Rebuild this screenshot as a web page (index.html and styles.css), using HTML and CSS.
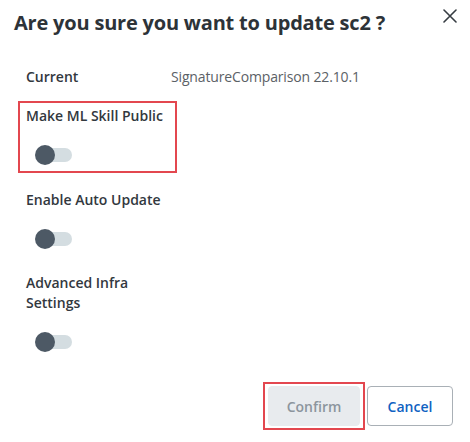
FILE: index.html
```html
<!DOCTYPE html>
<html lang="en">
<head>
<meta charset="utf-8">
<title>Update ML Skill</title>
<link rel="stylesheet" href="styles.css">
</head>
<body>
<div class="dialog">
  <div class="dialog-header">
    <h1 class="dialog-title">Are you sure you want to update sc2 ?</h1>
    <button class="close-btn" aria-label="Close">
      <svg width="14" height="14" viewBox="0 0 14 14"><path d="M1 1 L13 13 M13 1 L1 13" stroke="#363c42" stroke-width="1.6" fill="none" stroke-linecap="round"/></svg>
    </button>
  </div>
  <div class="dialog-body">
    <div class="info-row">
      <span class="field-label info-label">Current</span>
      <span class="info-value">SignatureComparison 22.10.1</span>
    </div>
    <div class="field field-highlight">
      <div class="field-label">Make ML Skill Public</div>
      <div class="toggle"><span class="toggle-track"></span><span class="toggle-knob"></span></div>
    </div>
    <div class="field field-after-highlight">
      <div class="field-label">Enable Auto Update</div>
      <div class="toggle"><span class="toggle-track"></span><span class="toggle-knob"></span></div>
    </div>
    <div class="field">
      <div class="field-label narrow">Advanced Infra Settings</div>
      <div class="toggle"><span class="toggle-track"></span><span class="toggle-knob"></span></div>
    </div>
  </div>
  <div class="dialog-footer">
    <div class="btn-highlight">
      <button class="btn btn-confirm" disabled>Confirm</button>
    </div>
    <button class="btn btn-cancel">Cancel</button>
  </div>
</div>
</body>
</html>
```

FILE: styles.css
```css
html, body {
  margin: 0;
  padding: 0;
  background: #ffffff;
}
body {
  font-family: "Open Sans", "Noto Sans", sans-serif;
  color: #32383e;
}
.dialog {
  width: 470px;
  height: 442px;
  box-sizing: border-box;
}
.dialog-header {
  display: flex;
  justify-content: space-between;
  align-items: flex-start;
  padding: 9px 13px 0 14px;
}
.dialog-title {
  margin: 0;
  font-size: 20px;
  line-height: 28px;
  font-weight: 700;
  letter-spacing: -0.2px;
  color: #2d3338;
}
.close-btn {
  border: none;
  background: none;
  padding: 0;
  margin: 0;
  width: 14px;
  height: 14px;
  display: block;
  cursor: pointer;
}
.close-btn svg { display: block; }
.dialog-body {
  padding-left: 26px;
  margin-top: 30px;
}
.info-row {
  display: flex;
  align-items: baseline;
}
.field-label {
  font-size: 14px;
  line-height: 20px;
  font-weight: 600;
  color: #32383e;
}
.info-label {
  width: 145px;
  flex: none;
}
.info-value {
  font-size: 14px;
  line-height: 20px;
  letter-spacing: -0.15px;
  color: #5b6166;
}
.field {
  margin-top: 24px;
}
.field-highlight {
  margin-top: 14px;
  margin-left: -8px;
  border: 2px solid #e3474f;
  padding: 3px 6px 6px 6px;
  box-sizing: content-box;
  width: 143px;
}
.field-after-highlight {
  margin-top: 17px;
}
.narrow {
  width: 120px;
}
.toggle {
  position: relative;
  margin-top: 19px;
  margin-left: 9px;
  width: 37px;
  height: 20px;
}
.toggle-track {
  position: absolute;
  left: 3px;
  top: 3px;
  width: 34px;
  height: 14px;
  border-radius: 7px;
  background: #d4dde1;
}
.toggle-knob {
  position: absolute;
  left: 0;
  top: 0;
  width: 20px;
  height: 20px;
  border-radius: 50%;
  background: #4d5965;
}
.dialog-footer {
  display: flex;
  justify-content: flex-end;
  align-items: center;
  gap: 2px;
  padding-right: 17px;
  margin-top: 30px;
}
.btn-highlight {
  border: 2px solid #e3474f;
  padding: 2px 3px;
}
.btn {
  font-family: "Open Sans", "Noto Sans", sans-serif;
  font-size: 14px;
  font-weight: 600;
  height: 40px;
  border-radius: 4px;
  display: block;
  box-sizing: border-box;
}
.btn-confirm {
  width: 92px;
  background: #e8ebee;
  color: #8c959d;
  border: 1px solid #e8ebee;
}
.btn-cancel {
  width: 86px;
  background: #ffffff;
  color: #0f62c2;
  border: 1px solid #a9b0b6;
}
```
